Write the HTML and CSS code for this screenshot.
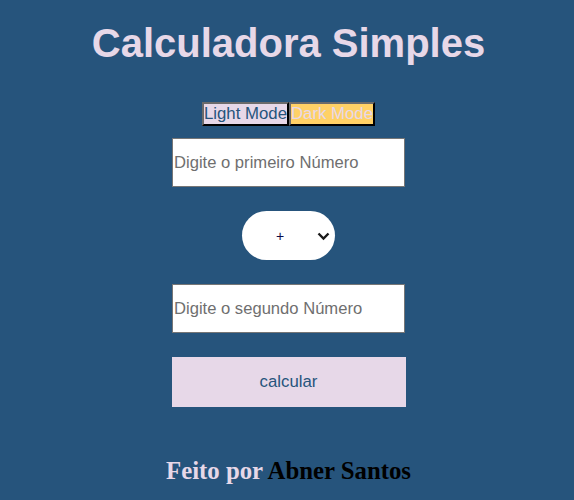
FILE: index.html
```html
<!DOCTYPE html>
<html lang="pt-BR">
<head>
<meta charset="utf-8">
<title>Calculadora Simples</title>
<link rel="stylesheet" href="styles.css">
</head>
<body>
<main class="app">
  <h1 class="title">Calculadora Simples</h1>
  <div class="modes"><button class="mode mode-light">Light Mode</button><button class="mode mode-dark">Dark Mode</button></div>
  <div class="form">
    <input class="num" type="text" placeholder="Digite o primeiro Número">
    <div class="op-wrap">
      <select class="op">
        <option>+</option>
        <option>-</option>
        <option>*</option>
        <option>/</option>
      </select>
      <svg class="chev" width="13" height="9" viewBox="0 0 13 9" aria-hidden="true"><path d="M1.5 1.5 L6.5 6.5 L11.5 1.5" fill="none" stroke="#1a1a1a" stroke-width="2.4"/></svg>
    </div>
    <input class="num" type="text" placeholder="Digite o segundo Número">
    <button class="calc">calcular</button>
  </div>
  <h2 class="footer">Feito por <span class="author">Abner Santos</span></h2>
</main>
</body>
</html>
```

FILE: styles.css
```css
html, body {
  margin: 0;
  padding: 0;
  background: #26547c;
}
body {
  font-family: "Liberation Sans", Arial, sans-serif;
  height: 500px;
}
.app {
  display: flex;
  flex-direction: column;
  align-items: center;
  padding-left: 3px;
}
.title {
  margin: 20px 0 36px;
  font-size: 40px;
  font-weight: bold;
  color: #e7d8e8;
  line-height: 46px;
}
.modes {
  display: flex;
}
.mode {
  font-family: "Liberation Sans", Arial, sans-serif;
  font-size: 16.8px;
  padding: 1px 0;
  border: 2px outset;
  border-color: #6b6b6b #222 #222 #6b6b6b;
  line-height: 18px;
}
.mode-light {
  background: #e7d8e8;
  color: #26547c;
}
.mode-dark {
  background: #ffd166;
  color: #e7d8e8;
}
.form {
  display: flex;
  flex-direction: column;
  align-items: center;
  gap: 24px;
  margin-top: 12px;
}
.num {
  box-sizing: border-box;
  width: 233px;
  height: 49px;
  padding: 1px 1px;
  border: 1px solid #767676;
  font-family: "Liberation Sans", Arial, sans-serif;
  font-size: 16.6px;
  background: #fff;
}
.num::placeholder {
  color: #6f6f6f;
}
.op-wrap {
  position: relative;
  width: 93px;
  height: 49px;
}
.op {
  -webkit-appearance: none;
  appearance: none;
  box-sizing: border-box;
  width: 93px;
  height: 49px;
  padding: 0 0 0 34px;
  border: none;
  border-radius: 25px;
  background: #fff;
  color: #0a0a4a;
  font-family: "Liberation Sans", Arial, sans-serif;
  font-size: 14px;
  outline: none;
}
.chev {
  position: absolute;
  right: 5px;
  top: 21px;
  pointer-events: none;
}
.calc {
  width: 234px;
  height: 50px;
  border: none;
  background: #e7d8e8;
  color: #26547c;
  font-family: "Liberation Sans", Arial, sans-serif;
  font-size: 16.8px;
}
.footer {
  margin: 50px 0 0;
  font-family: "Liberation Serif", "Times New Roman", serif;
  font-size: 24.8px;
  font-weight: bold;
  color: #e7d8e8;
  line-height: 28px;
}
.author {
  color: #000;
}
```
